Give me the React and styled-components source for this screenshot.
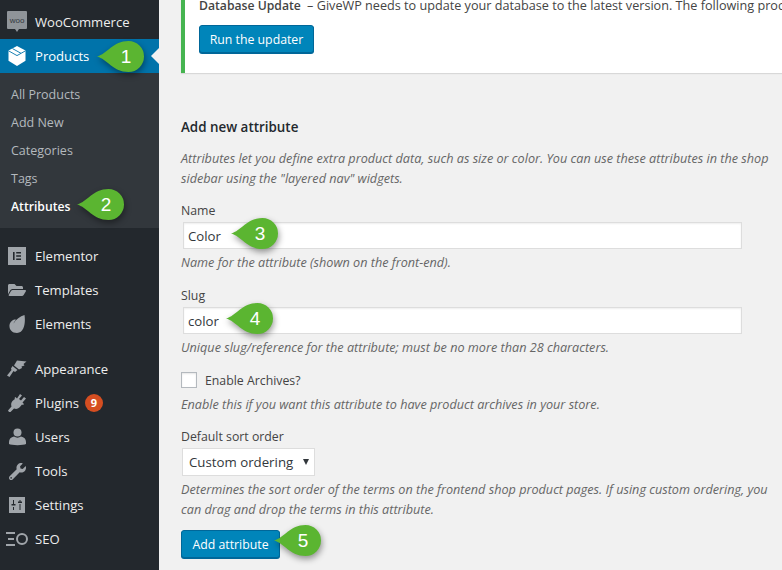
import React from "react";
import styled, { createGlobalStyle } from "styled-components";
import { FaFolderOpen, FaWrench } from "react-icons/fa";

const GlobalStyle = createGlobalStyle`
  html, body {
    margin: 0;
    height: 570px;
    overflow: hidden;
    background: #f1f1f1;
  }
  * {
    box-sizing: border-box;
  }
`;

const Page = styled.div`
  display: flex;
  width: 782px;
  height: 570px;
  overflow: hidden;
  font-family: "Open Sans", "Noto Sans", sans-serif;
  font-size: 12.3px;
  line-height: 20px;
  color: #444;
`;

const Sidebar = styled.nav`
  flex: 0 0 159px;
  padding-top: 5px;
  background: #23282d;
  font-size: 13.1px;
`;

const MenuRow = styled.div`
  position: relative;
  display: flex;
  align-items: center;
  height: 34px;
  margin-top: ${(p) => (p.$gap ? "11px" : "0")};
  background: ${(p) => (p.$active ? "#0073aa" : "transparent")};
  color: ${(p) => (p.$active ? "#fff" : "#eee")};

  ${(p) =>
    p.$active &&
    `&::after {
      content: "";
      position: absolute;
      right: 0;
      top: 9px;
      border: 8px solid transparent;
      border-right-color: #f1f1f1;
    }`}
`;

const IconSlot = styled.span`
  flex: 0 0 35px;
  display: flex;
  justify-content: center;
  padding-right: 1px;
  color: #a0a5aa;

  svg {
    display: block;
  }
`;

const SubMenu = styled.div`
  padding: 7px 0 8px;
  background: #32373c;
`;

const SubItem = styled.div`
  position: relative;
  height: 28px;
  padding: 1px 0 0 11px;
  font-size: ${(p) => (p.$current ? "12.2px" : "12.5px")};
  line-height: 28px;
  color: ${(p) => (p.$current ? "#fff" : "#b4b9be")};
  font-weight: ${(p) => (p.$current ? 600 : 400)};
`;

const Badge = styled.span`
  display: flex;
  align-items: center;
  justify-content: center;
  width: 18px;
  height: 18px;
  margin-left: 6px;
  border-radius: 50%;
  background: #d54e21;
  color: #fff;
  font-size: 11px;
  font-weight: 700;
`;

const Main = styled.main`
  flex: 1;
  min-width: 0;
  padding-left: 22px;
`;

const Notice = styled.div`
  height: 78px;
  margin-top: -5px;
  padding-left: 14px;
  border-left: 4px solid #46b450;
  background: #fff;
  box-shadow: 0 1px 1px rgba(0, 0, 0, 0.1);
  font-size: 12.65px;
  white-space: nowrap;
`;

const NoticeTitle = styled.span`
  font-size: 12.2px;
  font-weight: 600;
  line-height: 1;
  margin-right: 3px;
`;

const PrimaryButton = styled.button`
  display: block;
  width: ${(p) => p.$width}px;
  height: 28px;
  padding: 1px 0 0;
  border: 1px solid #006799;
  border-radius: 3px;
  background: #0085ba;
  box-shadow: 0 1px 0 #006799;
  color: #fff;
  font: inherit;
  font-size: 12.3px;
`;

const NoticeAction = styled.div`
  margin-top: 10px;
`;

const Form = styled.form`
  position: relative;
  width: 595px;
`;

const Heading = styled.h2`
  margin: 44px 0 0;
  font-size: 13.4px;
  line-height: 20px;
  font-weight: 600;
  color: #23282d;
`;

const Help = styled.p`
  margin: ${(p) => p.$top ?? 3}px 0 0;
  color: #666;
  font-size: 12.65px;
  font-style: italic;
`;

const Field = styled.div`
  position: relative;
  margin-top: ${(p) => p.$top ?? 13}px;
`;

const FieldLabel = styled.label`
  display: block;
  padding-top: 1px;
  margin-bottom: 1px;
`;

const TextInput = styled.input`
  display: block;
  width: 559px;
  height: 27px;
  margin-left: 2px;
  padding: 0 4px;
  border: 1px solid #ddd;
  border-radius: 0;
  outline: none;
  background: #fff;
  box-shadow: inset 0 1px 2px rgba(0, 0, 0, 0.07);
  color: #32373c;
  font: inherit;
  font-size: 13.2px;
`;

const CheckRow = styled.div`
  display: flex;
  align-items: center;
  height: 20px;
`;

const CheckBox = styled.span`
  width: 16px;
  height: 16px;
  margin-right: 8px;
  border: 1px solid #b4b9be;
  background: #fff;
  box-shadow: inset 0 1px 2px rgba(0, 0, 0, 0.1);
`;

const CheckText = styled.span`
  padding-top: 2px;
`;

const SelectWrap = styled.div`
  position: relative;
  width: 133px;
  margin-left: 1px;

  &::after {
    content: "";
    position: absolute;
    right: 6px;
    top: 11px;
    border: 3.5px solid transparent;
    border-top: 6px solid #32373c;
    border-bottom: 0;
    pointer-events: none;
  }
`;

const SortSelect = styled.select`
  display: block;
  width: 100%;
  height: 28px;
  padding: 0 6px;
  border: 1px solid #ddd;
  border-radius: 0;
  outline: none;
  appearance: none;
  background: #fff;
  color: #32373c;
  font: inherit;
  font-size: 13.25px;
`;

const ButtonRow = styled.div`
  position: relative;
  margin-top: 11px;
`;

const MarkerBox = styled.div`
  position: absolute;
  left: ${(p) => p.$x}px;
  top: ${(p) => p.$y}px;
  width: 47px;
  height: 31px;

  svg {
    display: block;
    overflow: visible;
    filter: drop-shadow(1px 3px 3px rgba(0, 0, 0, 0.4));
  }
`;

const MarkerNumber = styled.span`
  position: absolute;
  left: 0;
  width: 58px;
  top: 0;
  text-align: center;
  font-family: "Liberation Sans", Arial, sans-serif;
  font-size: 19px;
  font-weight: 400;
  line-height: 32px;
  color: #fff;
`;

const Marker = ({ n, x, y }) => (
  <MarkerBox $x={x} $y={y}>
    <svg width="47" height="31" viewBox="0 0 47 31">
      <path
        d="M0 15.5C10 13 16 0 31.5 0A15.5 15.5 0 0 1 31.5 31C16 31 10 18 0 15.5Z"
        fill="#5bb531"
      />
    </svg>
    <MarkerNumber>{n}</MarkerNumber>
  </MarkerBox>
);

const WooIcon = () => (
  <svg width="20" height="22" viewBox="0 0 20 22">
    <path d="M1 0h18a1 1 0 0 1 1 1v16a1 1 0 0 1-1 1h-7l-2 3-2-3H1a1 1 0 0 1-1-1V1a1 1 0 0 1 1-1z" fill="#8f9499" />
    <text x="10" y="12" textAnchor="middle" fontSize="8" fontFamily="Liberation Sans, sans-serif" fill="#33383d">
      woo
    </text>
  </svg>
);

const CubeIcon = () => (
  <svg width="20" height="20" viewBox="0 0 20 20">
    <path d="M10 0l8.5 4.6v10.2L10 20l-8.5-5.2V4.6z" fill="#fff" />
    <path d="M1.5 4.8L10 9.6l8.5-4.8M5.5 2.6l8.5 4.7" fill="none" stroke="#0073aa" strokeWidth="0.9" />
  </svg>
);

const ElementorIcon = () => (
  <svg width="18" height="18" viewBox="0 0 18 18">
    <path fillRule="evenodd" d="M0 0h18v18H0zM5 5v8h1.6V5zM8.2 5v1.6h4.8V5zM8.2 8.2v1.6h4.8V8.2zM8.2 11.4V13h4.8v-1.6z" fill="currentColor" />
  </svg>
);

const LeafIcon = () => (
  <svg width="16" height="18" viewBox="0 0 16 18">
    <path d="M15.5 0C16.5 6 16 18 8 18 2.500 18 0 14 .5 10 1 6 5 4 7 4.500 6 6 5 7 4.500 8.500 7 4 11 1.500 15.500 0z" fill="currentColor" />
  </svg>
);

const BrushIcon = () => (
  <svg width="20" height="20" viewBox="0 0 20 20">
    <path d="M10 1.500l9.500 1-3 2.500 1 1.500-3 1 .5 1.500-3 1.500-5-4z" fill="currentColor" />
    <path d="M5.500 7l5 4-2.500 2-1.500-1L2.500 18 0 16.500 4.500 11 4 9.500z" fill="currentColor" />
  </svg>
);

const PlugIcon = () => (
  <svg width="18" height="18" viewBox="0 0 18 18">
    <path d="M12 0l2 1.500-3 3.500 2 1.500L16 3l2 1.500-3.500 4 1.500 1.500-1 1-1-.500C12 13 10 16 6 14.500L2.500 18 1 18 0 16.500 3.500 12.500C2.500 9 4 7 7 5L6.500 4 7.500 3 9 4.500z" fill="currentColor" />
  </svg>
);

const UserIcon = () => (
  <svg width="17" height="18" viewBox="0 0 17 18">
    <circle cx="8.500" cy="4.500" r="4" fill="currentColor" />
    <path d="M0 14c0-3 2-5 5-5.500 2 1.500 5 1.500 7 0 3 .5 5 2.500 5 5.500v2c-2 1.500-15 1.500-17 0z" fill="currentColor" />
  </svg>
);

const SlidersIcon = () => (
  <svg width="16" height="16" viewBox="0 0 16 16">
    <path
      fillRule="evenodd"
      d="M0 0h16v16H0zM4 3v4H2.500v1.500h4V7H5V3zM4 10v3h1v-3zM10.500 3v1.500H9V6h4V4.500h-1.500V3zM10.500 7v6h1V7z"
      fill="currentColor"
    />
  </svg>
);

const SeoIcon = () => (
  <svg width="22" height="14" viewBox="0 0 22 14">
    <path d="M0 1h9M2 7h6M0 13h9" stroke="currentColor" strokeWidth="1.800" fill="none" />
    <circle cx="16" cy="7" r="5" stroke="currentColor" strokeWidth="2" fill="none" />
  </svg>
);

const MenuItem = ({ icon, gap, active, children }) => (
  <MenuRow $gap={gap} $active={active}>
    <IconSlot>{icon}</IconSlot>
    {children}
  </MenuRow>
);

export default function App() {
  return (
    <Page>
      <GlobalStyle />
      <Sidebar>
        <MenuItem icon={<WooIcon />}>WooCommerce</MenuItem>
        <MenuItem icon={<CubeIcon />} active>
          Products
          <Marker n="1" x={97} y={2} />
        </MenuItem>
        <SubMenu>
          <SubItem>All Products</SubItem>
          <SubItem>Add New</SubItem>
          <SubItem>Categories</SubItem>
          <SubItem>Tags</SubItem>
          <SubItem $current>
            Attributes
            <Marker n="2" x={77} y={-3} />
          </SubItem>
        </SubMenu>
        <MenuItem icon={<ElementorIcon />} gap>
          Elementor
        </MenuItem>
        <MenuItem icon={<FaFolderOpen size={18} />}>Templates</MenuItem>
        <MenuItem icon={<LeafIcon />}>Elements</MenuItem>
        <MenuItem icon={<BrushIcon />} gap>
          Appearance
        </MenuItem>
        <MenuItem icon={<PlugIcon />}>
          Plugins
          <Badge>9</Badge>
        </MenuItem>
        <MenuItem icon={<UserIcon />}>Users</MenuItem>
        <MenuItem icon={<FaWrench size={17} />}>Tools</MenuItem>
        <MenuItem icon={<SlidersIcon />}>Settings</MenuItem>
        <MenuItem icon={<SeoIcon />}>SEO</MenuItem>
      </Sidebar>
      <Main>
        <Notice>
          <NoticeTitle>Database Update</NoticeTitle> – GiveWP needs to update your database to the latest version. The
          following process may take a little while.
          <NoticeAction>
            <PrimaryButton type="button" $width={115}>
              Run the updater
            </PrimaryButton>
          </NoticeAction>
        </Notice>
        <Form>
          <Heading>Add new attribute</Heading>
          <Help $top={11}>
            Attributes let you define extra product data, such as size or color. You can use these attributes in the
            shop sidebar using the "layered nav" widgets.
          </Help>
          <Field $top={12}>
            <FieldLabel>Name</FieldLabel>
            <TextInput defaultValue="Color" />
            <Marker n="3" x={50} y={18} />
            <Help>Name for the attribute (shown on the front-end).</Help>
          </Field>
          <Field>
            <FieldLabel>Slug</FieldLabel>
            <TextInput defaultValue="color" />
            <Marker n="4" x={45} y={18} />
            <Help>Unique slug/reference for the attribute; must be no more than 28 characters.</Help>
          </Field>
          <Field>
            <CheckRow>
              <CheckBox />
              <CheckText>Enable Archives?</CheckText>
            </CheckRow>
            <Help $top={4}>Enable this if you want this attribute to have product archives in your store.</Help>
          </Field>
          <Field $top={12}>
            <FieldLabel>Default sort order</FieldLabel>
            <SelectWrap>
              <SortSelect defaultValue="custom">
                <option value="custom">Custom ordering</option>
              </SortSelect>
            </SelectWrap>
            <Help>
              Determines the sort order of the terms on the frontend shop product pages. If using custom ordering, you
              can drag and drop the terms in this attribute.
            </Help>
          </Field>
          <ButtonRow>
            <PrimaryButton type="submit" $width={99}>
              Add attribute
            </PrimaryButton>
            <Marker n="5" x={93} y={-5} />
          </ButtonRow>
        </Form>
      </Main>
    </Page>
  );
}
